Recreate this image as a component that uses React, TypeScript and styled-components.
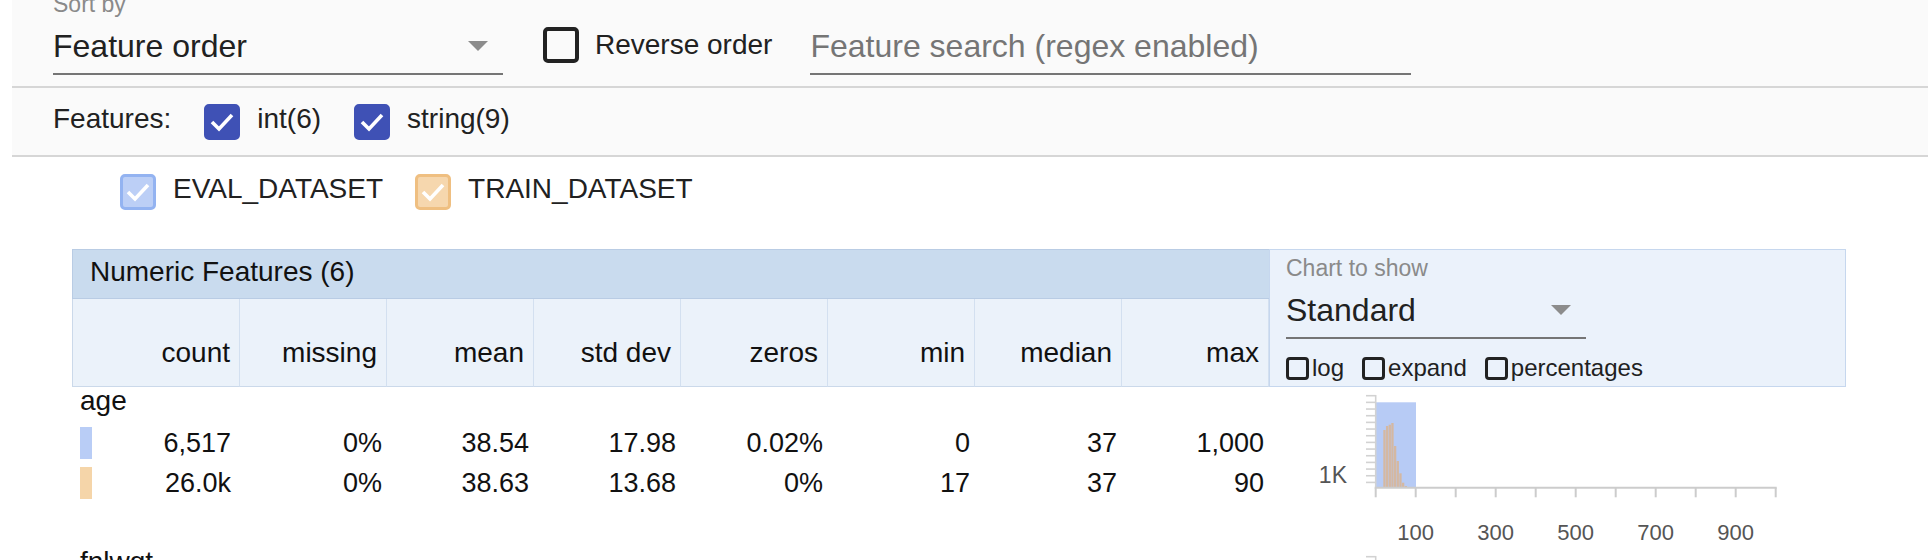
import React from 'react'
import styled, { createGlobalStyle } from 'styled-components'

const GlobalStyle = createGlobalStyle`
  *, *::before, *::after { box-sizing: border-box; }
  html, body { margin: 0; padding: 0; background: #fff; }
  body {
    font-family: "Liberation Sans", Arial, sans-serif;
    color: #212121;
    overflow: hidden;
  }
`

const COLUMNS = '168px repeat(7, 147px) 1fr'

const Page = styled.div`
  width: 1928px;
  height: 560px;
  overflow: hidden;
`

const Controls = styled.div`
  margin-left: 12px;
  background: #fafafa;
`

const SortRow = styled.div`
  display: flex;
  align-items: flex-start;
  height: 97px;
  margin-top: -9px;
  padding-left: 41px;
  border-bottom: 2px solid #d6d6d6;
`

const Field = styled.div<{ $width: number }>`
  width: ${p => p.$width}px;
  display: flex;
  flex-direction: column;
`

const FieldLabel = styled.div`
  font-size: 23px;
  line-height: 26px;
  color: #8a8a8a;
  margin-bottom: 9px;
`

const SelectBox = styled.div`
  display: flex;
  align-items: center;
  justify-content: space-between;
  height: 49px;
  padding-bottom: 7px;
  border-bottom: 2px solid #757575;
  font-size: 32px;
  line-height: 40px;
  color: #212121;
`

const Arrow = styled.svg`
  margin-right: 15px;
  flex: none;
`

const ReverseOption = styled.label`
  display: flex;
  align-items: center;
  gap: 16px;
  margin: 36px 0 0 40px;
  font-size: 28px;
  line-height: 32px;
`

const OutlineBox = styled.span<{ $size: number; $border: number }>`
  display: block;
  flex: none;
  width: ${p => p.$size}px;
  height: ${p => p.$size}px;
  border: ${p => p.$border}px solid #222;
  border-radius: ${p => (p.$border > 3 ? 5 : 4)}px;
`

const SearchInput = styled.input`
  width: 601px;
  height: 49px;
  margin: 35px 0 0 38px;
  padding: 0 0 7px;
  border: none;
  border-bottom: 2px solid #757575;
  background: transparent;
  font-family: inherit;
  font-size: 32px;
  color: #212121;
  outline: none;
  &::placeholder { color: #757575; }
`

const FeatureRow = styled.div`
  display: flex;
  align-items: center;
  height: 69px;
  padding-left: 41px;
  border-bottom: 2px solid #d6d6d6;
`

const RowText = styled.span`
  font-size: 28px;
  line-height: 32px;
  margin-bottom: 5px;
  color: #212121;
`

const Option = styled.label<{ $gap: number }>`
  display: flex;
  align-items: center;
  gap: 17px;
  margin-left: ${p => p.$gap}px;
`

const FilledBox = styled.span<{ $fill: string; $edge: string }>`
  display: flex;
  align-items: center;
  justify-content: center;
  flex: none;
  width: 36px;
  height: 36px;
  border-radius: 5px;
  background: ${p => p.$fill};
  border: 3px solid ${p => p.$edge};
`

const LegendRow = styled.div`
  display: flex;
  align-items: center;
  padding: 16px 0 0 108px;
`

const Table = styled.div`
  margin: 39px 0 0 72px;
  width: 1774px;
`

const HeaderGrid = styled.div`
  display: grid;
  grid-template-columns: ${COLUMNS};
  grid-template-rows: 50px 88px;
`

const TitleCell = styled.div`
  grid-column: 1 / 9;
  background: #c9dbee;
  border: 1px solid #b9cce4;
  border-right: none;
  font-size: 28px;
  line-height: 44px;
  padding-left: 17px;
  color: #111;
`

const HeadCell = styled.div<{ $first?: boolean }>`
  display: flex;
  align-items: flex-end;
  justify-content: flex-end;
  padding: 0 9px 17px 0;
  background: #ebf2fa;
  border-right: 1px solid #d3e0f0;
  border-bottom: 1px solid #cbd9ea;
  border-left: ${p => (p.$first ? '1px solid #cbd9ea' : 'none')};
  font-size: 28px;
  line-height: 32px;
  color: #111;
`

const ChartPanel = styled.div`
  grid-column: 9;
  grid-row: 1 / 3;
  background: #ebf2fb;
  border: 1px solid #c6d7ee;
  padding: 5px 0 0 16px;
`

const ToggleRow = styled.div`
  display: flex;
  align-items: center;
  margin-top: 15px;
`

const Toggle = styled.label`
  display: flex;
  align-items: center;
  gap: 3px;
  margin-right: 18px;
  font-size: 24px;
  line-height: 28px;
  color: #212121;
`

const FeatureBlock = styled.div`
  display: grid;
  grid-template-columns: ${COLUMNS};
  grid-template-rows: 36px 40px 40px;
  height: 161px;
  align-content: start;
`

const FeatureName = styled.div`
  grid-column: 1 / 9;
  font-size: 28px;
  line-height: 28px;
  padding-left: 8px;
  color: #111;
`

const ValueCell = styled.div<{ $first?: boolean }>`
  display: flex;
  align-items: center;
  justify-content: ${p => (p.$first ? 'space-between' : 'flex-end')};
  padding: ${p => (p.$first ? '0 9px 0 8px' : '0 5px 0 0')};
  font-size: 27px;
  line-height: 40px;
  color: #111;
`

const Swatch = styled.span<{ $color: string }>`
  display: block;
  width: 12px;
  height: 32px;
  background: ${p => p.$color};
`

const ChartCell = styled.div`
  grid-column: 9;
  grid-row: 1 / 4;
`

const EVAL = '#b9cdf6'
const TRAIN = '#f5d5a9'

const Check = ({ color = '#fff' }: { color?: string }) => (
  <svg width="26" height="22" viewBox="0 0 26 22">
    <polyline points="3,11 10,18 23,4" fill="none" stroke={color} strokeWidth="3.6" />
  </svg>
)

const Dropdown = ({ label, value, width }: { label: string; value: string; width: number }) => (
  <Field $width={width}>
    <FieldLabel>{label}</FieldLabel>
    <SelectBox>
      <span>{value}</span>
      <Arrow width="20" height="10" viewBox="0 0 20 10">
        <polygon points="0,0 20,0 10,10" fill="#8c8c8c" />
      </Arrow>
    </SelectBox>
  </Field>
)

type Bar = [number, number]

const Histogram = ({ bars, label }: { bars: Bar[]; label: string }) => {
  const ox = 106.7
  const axisY = 100.7
  const minor = Array.from({ length: 14 }, (_, k) => 8.7 + k * 6.67)
  const ticks = Array.from({ length: 11 }, (_, k) => ox + k * 40)
  return (
    <svg width="577" height="161" viewBox="0 0 577 161">
      <rect x={ox} y={15.3} width={40.3} height={axisY - 15.3} fill="#b7cbf5" />
      {bars.map(([i, top]) => (
        <rect key={i} x={114.3 + i * 2.67} y={top} width={2.3} height={axisY - top} fill="#d4b8a2" />
      ))}
      {minor.map(y => (
        <line key={y} x1={97} x2={ox} y1={y} y2={y} stroke="#d2d2d2" strokeWidth="1.6" />
      ))}
      <line x1={ox} x2={ox} y1={8} y2={axisY} stroke="#d2d2d2" strokeWidth="1.6" />
      <line x1={ox - 1} x2={ticks[10] + 1} y1={axisY} y2={axisY} stroke="#cccccc" strokeWidth="2" />
      {ticks.map(x => (
        <line key={x} x1={x} x2={x} y1={axisY} y2={110.3} stroke="#cccccc" strokeWidth="2" />
      ))}
      <text x={78} y={96} textAnchor="end" fontSize="23" fill="#555" fontFamily="Liberation Sans, Arial, sans-serif">
        {label}
      </text>
      {['100', '300', '500', '700', '900'].map((t, k) => (
        <text key={t} x={ox + 40 + k * 80} y={153} textAnchor="middle" fontSize="22" fill="#555" fontFamily="Liberation Sans, Arial, sans-serif">
          {t}
        </text>
      ))}
    </svg>
  )
}

const AGE_BARS: Bar[] = [[0, 43], [1, 39], [2, 37.7], [3, 36], [4, 59], [5, 74], [6, 86.3], [7, 95.7], [8, 99], [9, 100]]
const FNL_BARS: Bar[] = [[0, 20], [1, 30], [2, 55], [3, 80], [4, 95]]

const HEADERS = ['count', 'missing', 'mean', 'std dev', 'zeros', 'min', 'median', 'max']

const FEATURES = [
  {
    name: 'age',
    bars: AGE_BARS,
    axis: '1K',
    rows: [
      { color: EVAL, values: ['6,517', '0%', '38.54', '17.98', '0.02%', '0', '37', '1,000'] },
      { color: TRAIN, values: ['26.0k', '0%', '38.63', '13.68', '0%', '17', '37', '90'] },
    ],
  },
  {
    name: 'fnlwgt',
    bars: FNL_BARS,
    axis: '2K',
    rows: [
      { color: EVAL, values: ['6,517', '0%', '189k', '105k', '0%', '13.5k', '178k', '1.49M'] },
      { color: TRAIN, values: ['26.0k', '0%', '190k', '106k', '0%', '12.3k', '178k', '1.48M'] },
    ],
  },
]

export default function App() {
  return (
    <Page>
      <GlobalStyle />
      <Controls>
        <SortRow>
          <Dropdown label="Sort by" value="Feature order" width={450} />
          <ReverseOption>
            <OutlineBox $size={36} $border={4} />
            Reverse order
          </ReverseOption>
          <SearchInput placeholder="Feature search (regex enabled)" />
        </SortRow>
        <FeatureRow>
          <RowText>Features:</RowText>
          <Option $gap={33}>
            <FilledBox $fill="#3f51b5" $edge="#3f51b5"><Check /></FilledBox>
            <RowText>int(6)</RowText>
          </Option>
          <Option $gap={33}>
            <FilledBox $fill="#3f51b5" $edge="#3f51b5"><Check /></FilledBox>
            <RowText>string(9)</RowText>
          </Option>
        </FeatureRow>
      </Controls>

      <LegendRow>
        <Option $gap={12}>
          <FilledBox $fill="#bccff6" $edge="#93b3f1"><Check /></FilledBox>
          <RowText>EVAL_DATASET</RowText>
        </Option>
        <Option $gap={32}>
          <FilledBox $fill="#f6d7ae" $edge="#efbf81"><Check /></FilledBox>
          <RowText>TRAIN_DATASET</RowText>
        </Option>
      </LegendRow>

      <Table>
        <HeaderGrid>
          <TitleCell>Numeric Features (6)</TitleCell>
          <ChartPanel>
            <Dropdown label="Chart to show" value="Standard" width={300} />
            <ToggleRow>
              <Toggle><OutlineBox $size={23} $border={3} />log</Toggle>
              <Toggle><OutlineBox $size={23} $border={3} />expand</Toggle>
              <Toggle><OutlineBox $size={23} $border={3} />percentages</Toggle>
            </ToggleRow>
          </ChartPanel>
          {HEADERS.map((h, i) => (
            <HeadCell key={h} $first={i === 0}>{h}</HeadCell>
          ))}
        </HeaderGrid>

        {FEATURES.map(f => (
          <FeatureBlock key={f.name}>
            <FeatureName>{f.name}</FeatureName>
            <ChartCell>
              <Histogram bars={f.bars} label={f.axis} />
            </ChartCell>
            {f.rows.map((r, ri) =>
              r.values.map((v, i) => (
                <ValueCell key={`${ri}-${i}`} $first={i === 0}>
                  {i === 0 && <Swatch $color={r.color} />}
                  {v}
                </ValueCell>
              ))
            )}
          </FeatureBlock>
        ))}
      </Table>
    </Page>
  )
}
